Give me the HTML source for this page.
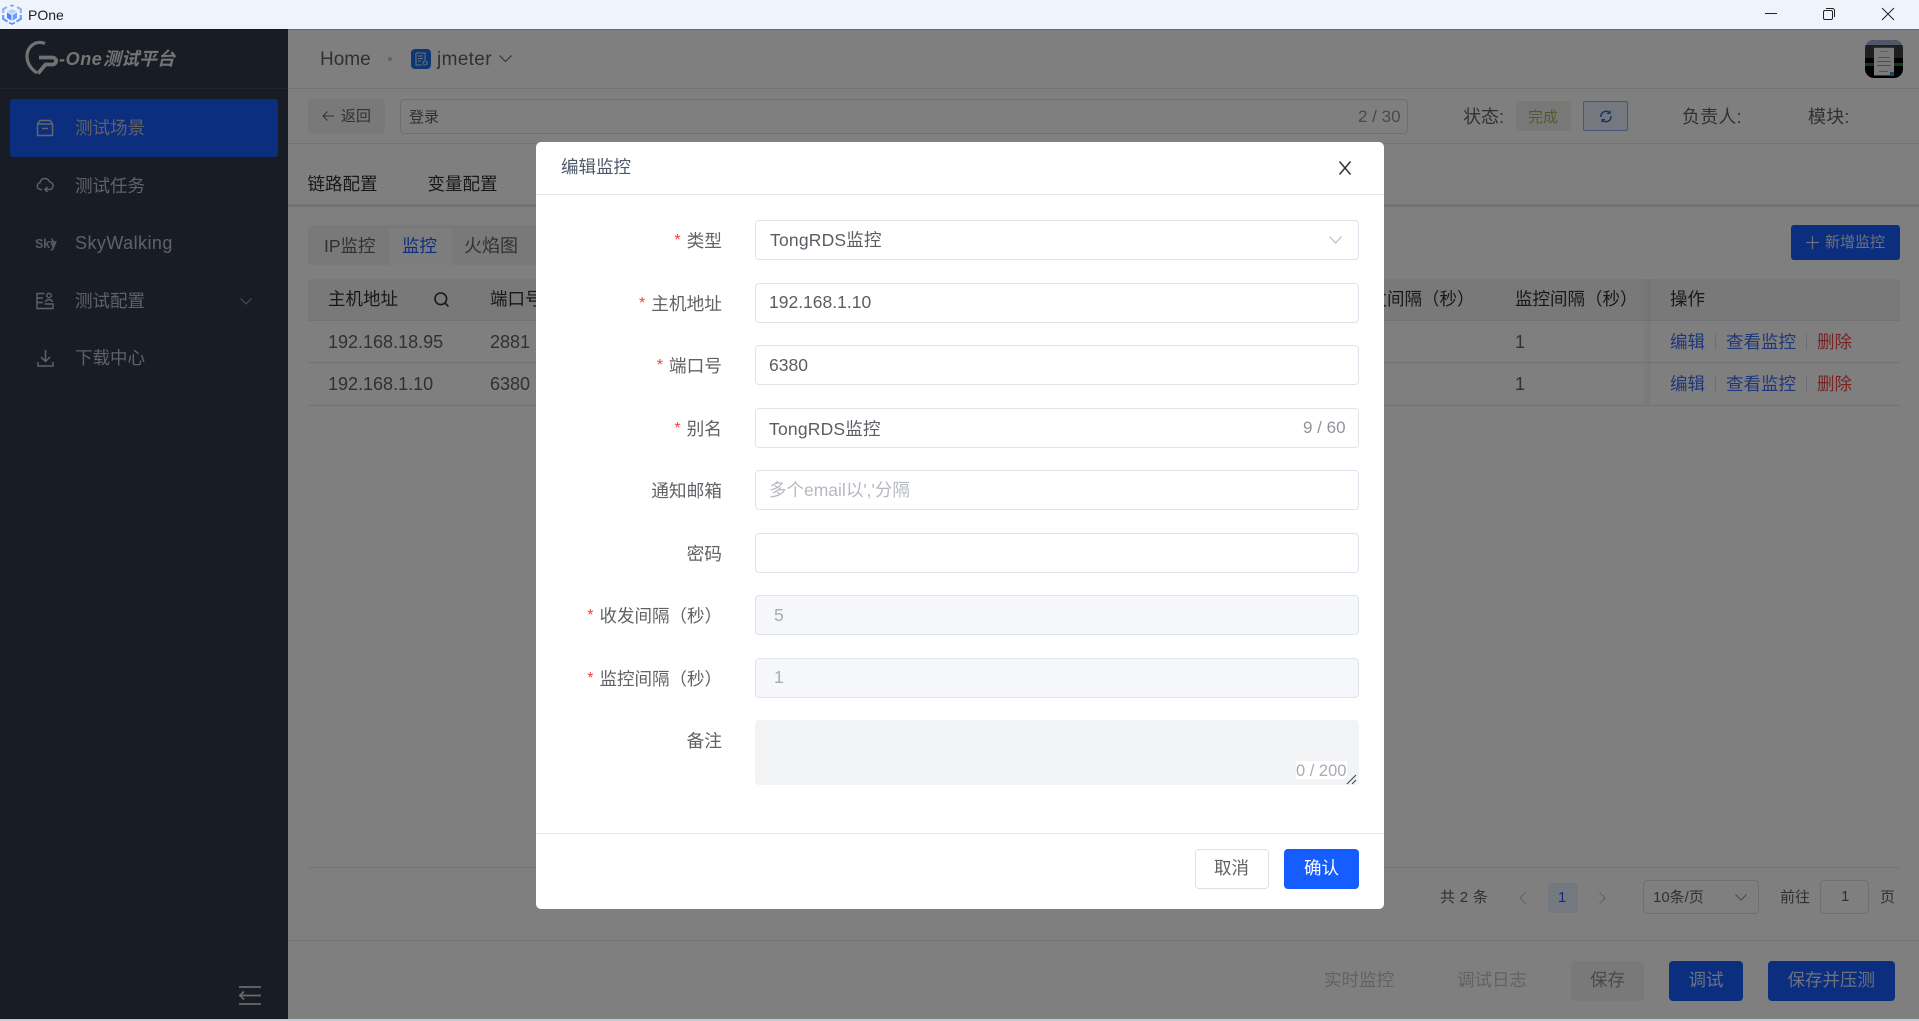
<!DOCTYPE html>
<html lang="zh-CN">
<head>
<meta charset="utf-8">
<title>POne</title>
<style>
html,body{margin:0;padding:0;width:1919px;height:1021px;overflow:hidden;background:#fff;}
body{font-family:"Liberation Sans","Noto Sans CJK SC",sans-serif;font-size:17.5px;color:#303133;position:relative;}
.a{position:absolute;box-sizing:border-box;}
.t{position:absolute;white-space:nowrap;height:24px;line-height:24px;}
svg{position:absolute;overflow:visible;}
.m{color:#bfc3cc;font-size:17.5px;}
.line{position:absolute;height:1px;background:#e4e7ed;}
.lbl{position:absolute;white-space:nowrap;height:24px;line-height:24px;right:1197px;text-align:right;color:#606266;font-size:17.7px;}
.lbl b{font-weight:normal;color:#f53f3f;font-size:16px;margin-right:6px;position:relative;top:-2px;}
.inp{position:absolute;left:755px;width:604px;height:40px;box-sizing:border-box;border:1.5px solid #e1e3ec;border-radius:4px;background:#fff;}
.inp.dis{background:#f5f7fa;}
.val{position:absolute;white-space:nowrap;height:24px;line-height:24px;color:#5a5d63;left:769px;}
.n{font-size:18px;color:#606266;}
</style>
</head>
<body>

<!-- title bar -->
<div class="a" style="left:0;top:0;width:1919px;height:29px;background:#eff4fc;"></div>
<svg style="left:2px;top:4px" width="20" height="20" viewBox="0 0 20 20">
  <path d="M7.5 1.6 10 .4 12.5 1.6 10 3Z" fill="#7aa2ff"/>
  <path d="M5 3 1.2 5.2V9" fill="none" stroke="#8fb2ff" stroke-width="2.2"/>
  <path d="M15 3 18.8 5.2V9" fill="none" stroke="#8fb2ff" stroke-width="2.2"/>
  <path d="M1.2 11V15L5.5 17.6M18.8 11V15L14.5 17.6" fill="none" stroke="#6b9bff" stroke-width="2.2"/>
  <path d="M7 18.6 10 20 13 18.6" fill="none" stroke="#5b8cff" stroke-width="1.6"/>
  <path d="M5 7.5 10 10.2 15 7.5 10 5Z" fill="#b9cfff"/>
  <path d="M5 8.5 9.4 11V16.6L5 14Z" fill="#4f84fb"/>
  <path d="M15 8.5 10.6 11V16.6L15 14Z" fill="#6b9bff"/>
</svg>
<div class="t" style="left:28px;top:3px;font-size:14px;color:#1f1f1f;">POne</div>
<svg style="left:1765px;top:13px" width="12" height="2"><path d="M0 .5H12" stroke="#222" stroke-width="1"/></svg>
<svg style="left:1823px;top:8px" width="12" height="12" viewBox="0 0 12 12"><rect x=".5" y="2.5" width="9" height="9" rx="1.5" fill="none" stroke="#222"/><path d="M3 .5H9.5A2 2 0 0 1 11.5 2.5V9" fill="none" stroke="#222"/></svg>
<svg style="left:1882px;top:8px" width="12" height="12" viewBox="0 0 12 12"><path d="M0 0 12 12M12 0 0 12" stroke="#222" stroke-width="1"/></svg>

<!-- sidebar -->
<div class="a" style="left:0;top:29px;width:288px;height:992px;background:#30384a;"></div>
<div class="line" style="left:0;top:88px;width:288px;background:#3f4757;"></div>
<svg style="left:20px;top:36px" width="40" height="44" viewBox="0 0 40 44" fill="none" stroke="#e4e4e4">
  <path d="M25 7.5C15 3.500 7 11.500 7 20C7 27 11 33 17 37" stroke-width="3.200"/>
  <path d="M19 21.500H32C37.500 21.500 37.500 28.500 32 28.500H25.500L18 37.500" stroke-width="3.800"/>
</svg>
<div class="t" style="left:59px;top:47px;font-size:18px;font-weight:bold;font-style:italic;color:#e8e8e8;letter-spacing:.6px;">-One</div>
<div class="t" style="left:103px;top:47px;font-size:18px;font-weight:bold;font-style:italic;color:#e8e8e8;">测试平台</div>

<div class="a" style="left:10px;top:99px;width:268px;height:58px;background:#165dff;border-radius:3px;"></div>
<svg style="left:36px;top:119px" width="18" height="18" viewBox="0 0 18 18" fill="none" stroke="#c8ccd4" stroke-width="1.5"><path d="M1.5 5V16.5H16.5V5L14 1.5H4Z"/><path d="M1.5 5H16.5M6 9.5H12"/></svg>
<div class="t m" style="left:75px;top:116px;">测试场景</div>

<svg style="left:36px;top:176px" width="18" height="18" viewBox="0 0 18 18" fill="none" stroke="#bfc3cc" stroke-width="1.5"><path d="M6 13.5H4.500A3.500 3.500 0 0 1 4 6.600 5 5 0 0 1 13.700 6 3.800 3.800 0 0 1 14 13.500H9.500"/><path d="M11.500 11 9 13.500 11.500 16"/></svg>
<div class="t m" style="left:75px;top:173.500px;">测试任务</div>

<div class="t" style="left:35px;top:232px;font-size:12.500px;font-weight:bold;letter-spacing:-.2px;color:#b0b4bc;">Sky</div>
<svg style="left:50px;top:238px" width="6" height="11" viewBox="0 0 6 11" fill="#b0b4bc"><path d="M0 0C5 1 6.500 7 2 11C3.500 7 3 3 0 0Z"/></svg>
<div class="t" style="left:75px;top:230.500px;font-size:18px;color:#bfc3cc;letter-spacing:.45px;">SkyWalking</div>

<svg style="left:36px;top:292px" width="18" height="18" viewBox="0 0 18 18" fill="none" stroke="#bfc3cc" stroke-width="1.4"><path d="M8.500 1.500H1V16.500H17V12H8.500M1 6H7M1 10.500H7"/><circle cx="13" cy="3.500" r="2.200"/><path d="M9.500 10C10 7 16 7 16.500 10"/></svg>
<div class="t m" style="left:75px;top:289px;">测试配置</div>
<svg style="left:240px;top:298px" width="12" height="7" viewBox="0 0 12 7" fill="none" stroke="#9a9ea8" stroke-width="1"><path d="M.5 .5 6 6 11.500 .5"/></svg>

<svg style="left:37px;top:349px" width="17" height="18" viewBox="0 0 17 18" fill="none" stroke="#bfc3cc" stroke-width="1.5"><path d="M8.500 1V12M4 8 8.500 12.500 13 8"/><path d="M1 13V17H16V13"/></svg>
<div class="t m" style="left:75px;top:346px;">下载中心</div>

<svg style="left:239px;top:986px" width="22" height="20" viewBox="0 0 22 20" fill="none" stroke="#d4d4d4" stroke-width="1.700"><path d="M0 1H22M0 9.500H22M0 18H22"/><path d="M5 5.500 1 9.500 5 13.500"/></svg>

<!-- header -->
<div class="line" style="left:288px;top:88px;width:1631px;"></div>
<div class="t" style="left:320px;top:48px;font-size:19px;color:#606266;">Home</div>
<div class="a" style="left:388px;top:57px;width:4px;height:4px;border-radius:50%;background:#c0c4cc;"></div>
<div class="a" style="left:411px;top:49px;width:20px;height:20px;border-radius:4px;background:#1a6fe8;"></div>
<svg style="left:415px;top:52px" width="13" height="14" viewBox="0 0 13 14" fill="none" stroke="#cfe0ff" stroke-width="1.100"><path d="M1 1H10V8M1 1V13H7"/><path d="M3 4H8M3 6.500H8M3 9H6"/><circle cx="10" cy="11" r="2"/></svg>
<div class="t" style="left:437px;top:47.500px;font-size:19px;color:#606266;letter-spacing:.35px;">jmeter</div>
<svg style="left:499px;top:55px" width="13" height="8" viewBox="0 0 13 8" fill="none" stroke="#606266" stroke-width="1.100"><path d="M.5 .5 6.500 6.500 12.500 .5"/></svg>
<!-- avatar -->
<div class="a" style="left:1865px;top:40px;width:38px;height:38px;border-radius:9px;background:#000;overflow:hidden;">
  <div class="a" style="left:0;top:0;width:38px;height:5px;background:#9db0d0;"></div>
  <div class="a" style="left:0;top:5px;width:38px;height:13px;background:#3a3f45;"></div>
  <div class="a" style="left:0;top:23px;width:38px;height:3px;background:#2a6a3a;"></div>
  <div class="a" style="left:9px;top:7px;width:20px;height:29px;background:#f4f4f4;border-top:1px solid #e33;border-bottom:1px solid #e33;"></div>
  <div class="a" style="left:15px;top:11px;width:8px;height:1px;background:#bbb;"></div>
  <div class="a" style="left:13px;top:17px;width:12px;height:1px;background:#aaa;"></div>
  <div class="a" style="left:12px;top:21px;width:14px;height:1px;background:#999;"></div>
  <div class="a" style="left:12px;top:25px;width:14px;height:1px;background:#999;"></div>
  <div class="a" style="left:14px;top:31px;width:9px;height:1px;background:#aaa;"></div>
  <div class="a" style="left:25px;top:32px;width:4px;height:4px;background:#3a8ee8;"></div>
</div>

<!-- toolbar -->
<div class="a" style="left:308px;top:99px;width:77px;height:35px;background:#f2f3f5;border-radius:4px;"></div>
<svg style="left:322px;top:110px" width="12" height="12" viewBox="0 0 12 12" fill="none" stroke="#606266" stroke-width="1"><path d="M12 6H1M5.500 1.500 1 6 5.500 10.500"/></svg>
<div class="t" style="left:341px;top:105px;font-size:15px;color:#606266;">返回</div>
<div class="a" style="left:400px;top:99px;width:1008px;height:35px;border:1.5px solid #dcdfe6;border-radius:4px;background:#fff;"></div>
<div class="t" style="left:409px;top:106px;font-size:15px;color:#606266;">登录</div>
<div class="t" style="left:1358px;top:105px;font-size:17px;color:#909399;">2 / 30</div>
<div class="t" style="left:1463px;top:105px;font-size:18px;color:#606266;">状态:</div>
<div class="a" style="left:1516px;top:101px;width:55px;height:30px;background:#f0f2ec;border-radius:4px;"></div>
<div class="t" style="left:1528px;top:106px;font-size:15px;color:#9fb76a;">完成</div>
<div class="a" style="left:1583px;top:101px;width:45px;height:30px;background:#ecf1ff;border:1.5px solid #8aaaf5;border-radius:2px;"></div>
<svg style="left:1600px;top:110px" width="12" height="13" viewBox="0 0 12 13" fill="none" stroke="#2c60e0" stroke-width="1.500"><path d="M1 7A5 5 0 0 1 9.500 2.800M11 6A5 5 0 0 1 2.500 10.200"/><path d="M10 .5V3.500H7M2 12.500V9.500H5" stroke-width="1.100"/></svg>
<div class="t" style="left:1682px;top:105px;font-size:18px;color:#606266;letter-spacing:.2px;">负责人:</div>
<div class="t" style="left:1808px;top:105px;font-size:18px;color:#606266;letter-spacing:.2px;">模块:</div>
<div class="line" style="left:288px;top:143px;width:1631px;"></div>

<!-- tabs -->
<div class="t" style="left:307.500px;top:171.500px;color:#303133;">链路配置</div>
<div class="t" style="left:427.500px;top:171.500px;color:#303133;">变量配置</div>
<div class="a" style="left:288px;top:204px;width:1631px;height:3px;background:#e4e7ed;"></div>

<div class="a" style="left:308px;top:225px;width:240px;height:40px;background:#f2f3f5;border-radius:4px;"></div>
<div class="a" style="left:389px;top:228px;width:63px;height:37px;background:#fafafa;"></div>
<div class="t" style="left:324px;top:233.500px;color:#606266;">IP监控</div>
<div class="t" style="left:402px;top:233.500px;color:#165dff;">监控</div>
<div class="t" style="left:464px;top:233.500px;font-size:18px;color:#606266;">火焰图</div>
<div class="a" style="left:1791px;top:225px;width:109px;height:35px;background:#165dff;border-radius:3px;"></div>
<svg style="left:1806px;top:236px" width="13" height="13"><path d="M6.500 0V13M0 6.500H13" stroke="#d6e2ff" stroke-width="1.200"/></svg>
<div class="t" style="left:1825px;top:231px;font-size:15px;color:#d6e2ff;">新增监控</div>

<!-- table -->
<div class="a" style="left:308px;top:279px;width:1592px;height:41px;background:#f2f3f5;"></div>
<div class="t" style="left:328px;top:287px;color:#303133;">主机地址</div>
<svg style="left:434px;top:292px" width="15" height="15" viewBox="0 0 15 15" fill="none" stroke="#303133" stroke-width="1.600"><circle cx="6.800" cy="6.800" r="5.800"/><path d="M11 11 14.400 14.400"/></svg>
<div class="t" style="left:490px;top:287px;color:#303133;">端口号</div>
<div class="t" style="left:1352px;top:287px;color:#303133;">收发间隔（秒）</div>
<div class="t" style="left:1515px;top:287px;color:#303133;">监控间隔（秒）</div>
<div class="t" style="left:1670px;top:287px;color:#303133;">操作</div>
<div class="line" style="left:308px;top:320px;width:1592px;"></div>
<div class="line" style="left:308px;top:362px;width:1592px;"></div>
<div class="line" style="left:308px;top:405px;width:1592px;"></div>
<div class="a" style="left:1640px;top:279px;width:10px;height:126px;background:linear-gradient(to right,rgba(0,0,0,0),rgba(0,0,0,.05));"></div>
<div class="t n" style="left:328px;top:329.500px;">192.168.18.95</div>
<div class="t n" style="left:490px;top:329.500px;">2881</div>
<div class="t n" style="left:1515px;top:329.500px;">1</div>
<div class="t" style="left:1670px;top:330px;color:#3a6ff7;">编辑</div>
<div class="a" style="left:1715px;top:334px;width:1px;height:16px;background:#dcdfe6;"></div>
<div class="t" style="left:1726px;top:330px;color:#3a6ff7;">查看监控</div>
<div class="a" style="left:1806px;top:334px;width:1px;height:16px;background:#dcdfe6;"></div>
<div class="t" style="left:1817px;top:330px;color:#f04848;">删除</div>
<div class="t n" style="left:328px;top:371.500px;">192.168.1.10</div>
<div class="t n" style="left:490px;top:371.500px;">6380</div>
<div class="t n" style="left:1515px;top:371.500px;">1</div>
<div class="t" style="left:1670px;top:372px;color:#3a6ff7;">编辑</div>
<div class="a" style="left:1715px;top:376px;width:1px;height:16px;background:#dcdfe6;"></div>
<div class="t" style="left:1726px;top:372px;color:#3a6ff7;">查看监控</div>
<div class="a" style="left:1806px;top:376px;width:1px;height:16px;background:#dcdfe6;"></div>
<div class="t" style="left:1817px;top:372px;color:#f04848;">删除</div>

<!-- pagination -->
<div class="line" style="left:308px;top:867px;width:1592px;"></div>
<div class="t" style="left:1440px;top:886px;font-size:15px;color:#606266;letter-spacing:.3px;">共 2 条</div>
<svg style="left:1519px;top:892px" width="7" height="12" viewBox="0 0 7 12" fill="none" stroke="#c0c4cc" stroke-width="1.100"><path d="M6.500 .5 1 6 6.500 11.500"/></svg>
<div class="a" style="left:1548px;top:883px;width:30px;height:30px;background:#e8f0ff;border-radius:3px;"></div>
<div class="t" style="left:1558px;top:886px;font-size:15px;color:#165dff;">1</div>
<svg style="left:1599px;top:892px" width="7" height="12" viewBox="0 0 7 12" fill="none" stroke="#c0c4cc" stroke-width="1.100"><path d="M.5 .5 6 6 .5 11.500"/></svg>
<div class="a" style="left:1643px;top:880px;width:116px;height:34px;border:1.5px solid #dcdfe6;border-radius:4px;"></div>
<div class="t" style="left:1653px;top:886px;font-size:15px;color:#606266;">10条/页</div>
<svg style="left:1735px;top:894px" width="12" height="7" viewBox="0 0 12 7" fill="none" stroke="#909399" stroke-width="1.100"><path d="M.5 .5 6 6 11.500 .5"/></svg>
<div class="t" style="left:1780px;top:886px;font-size:15px;color:#606266;">前往</div>
<div class="a" style="left:1820px;top:880px;width:49px;height:34px;border:1.5px solid #dcdfe6;border-radius:4px;"></div>
<div class="t" style="left:1841px;top:885px;font-size:15px;color:#606266;">1</div>
<div class="t" style="left:1880px;top:886px;font-size:15px;color:#606266;">页</div>

<!-- bottom bar -->
<div class="line" style="left:288px;top:940px;width:1631px;"></div>
<div class="t" style="left:1324px;top:968px;color:#c0c4cc;">实时监控</div>
<div class="t" style="left:1457px;top:968px;color:#c0c4cc;">调试日志</div>
<div class="a" style="left:1571px;top:961px;width:73px;height:40px;background:#f2f3f5;border-radius:4px;"></div>
<div class="t" style="left:1590px;top:968px;color:#909399;">保存</div>
<div class="a" style="left:1669px;top:961px;width:74px;height:40px;background:#165dff;border-radius:4px;"></div>
<div class="t" style="left:1688.500px;top:968px;color:#d6e2ff;">调试</div>
<div class="a" style="left:1768px;top:961px;width:127px;height:40px;background:#165dff;border-radius:4px;"></div>
<div class="t" style="left:1787.500px;top:968px;color:#d6e2ff;">保存并压测</div>

<!-- overlay -->
<div class="a" style="left:0;top:29px;width:1919px;height:990px;background:rgba(0,0,0,.5);border-top:1px solid rgba(0,0,0,.15);"></div>
<div class="a" style="left:0;top:1019px;width:1919px;height:2px;background:#c5ccd8;"></div>

<!-- modal -->
<div class="a" style="left:536px;top:142px;width:848px;height:767px;background:#fff;border-radius:5px;"></div>
<div class="t" style="left:561px;top:155px;color:#4e5969;">编辑监控</div>
<svg style="left:1339px;top:161px" width="12" height="14" viewBox="0 0 12 14"><path d="M.5 .5 11.500 13.500M11.500 .5 .5 13.500" stroke="#303133" stroke-width="1.500" fill="none"/></svg>
<div class="line" style="left:536px;top:194px;width:848px;"></div>

<div class="lbl" style="top:229px;"><b>*</b>类型</div>
<div class="inp" style="top:220px;"></div>
<div class="val" style="top:228px;left:770px;letter-spacing:.2px;">TongRDS监控</div>
<svg style="left:1329px;top:236px" width="13" height="8" viewBox="0 0 13 8" fill="none" stroke="#b4b8c0" stroke-width="1.100"><path d="M.5 .5 6.500 7 12.500 .5"/></svg>

<div class="lbl" style="top:292px;"><b>*</b>主机地址</div>
<div class="inp" style="top:283px;"></div>
<div class="val" style="top:290px;">192.168.1.10</div>

<div class="lbl" style="top:354px;"><b>*</b>端口号</div>
<div class="inp" style="top:345px;"></div>
<div class="val" style="top:353px;">6380</div>

<div class="lbl" style="top:417px;"><b>*</b>别名</div>
<div class="inp" style="top:408px;"></div>
<div class="val" style="top:416.500px;letter-spacing:.2px;">TongRDS监控</div>
<div class="t" style="left:1303px;top:416px;font-size:17px;color:#909399;">9 / 60</div>

<div class="lbl" style="top:479px;">通知邮箱</div>
<div class="inp" style="top:470px;"></div>
<div class="val" style="top:478px;color:#b6b9c0;">多个email以','分隔</div>

<div class="lbl" style="top:542px;">密码</div>
<div class="inp" style="top:533px;"></div>

<div class="lbl" style="top:604px;font-size:17.5px;"><b>*</b>收发间隔（秒）</div>
<div class="inp dis" style="top:595px;"></div>
<div class="val" style="top:603px;left:774px;color:#a8abb2;">5</div>

<div class="lbl" style="top:667px;font-size:17.5px;"><b>*</b>监控间隔（秒）</div>
<div class="inp dis" style="top:658px;"></div>
<div class="val" style="top:665px;left:774px;color:#a8abb2;">1</div>

<div class="lbl" style="top:728.500px;">备注</div>
<div class="a" style="left:755px;top:720px;width:604px;height:65px;background:#f2f3f5;border-radius:4px;"></div>
<div class="a" style="left:1296px;top:761px;width:51px;height:18px;background:#fff;"></div>
<div class="t" style="left:1296px;top:759px;font-size:16.500px;color:#a8abb2;">0 / 200</div>
<svg style="left:1347px;top:775px" width="10" height="9" viewBox="0 0 10 9" fill="none" stroke="#444" stroke-width="1.100"><path d="M0 9 9 0M5 9 9 5"/></svg>

<div class="line" style="left:536px;top:833px;width:848px;"></div>
<div class="a" style="left:1195px;top:849px;width:74px;height:40px;background:#fff;border:1.5px solid #dfe1e8;border-radius:4px;"></div>
<div class="t" style="left:1214px;top:856px;color:#606266;">取消</div>
<div class="a" style="left:1284px;top:849px;width:75px;height:40px;background:#165dff;border-radius:4px;"></div>
<div class="t" style="left:1304px;top:855.500px;color:#fff;">确认</div>

</body>
</html>
